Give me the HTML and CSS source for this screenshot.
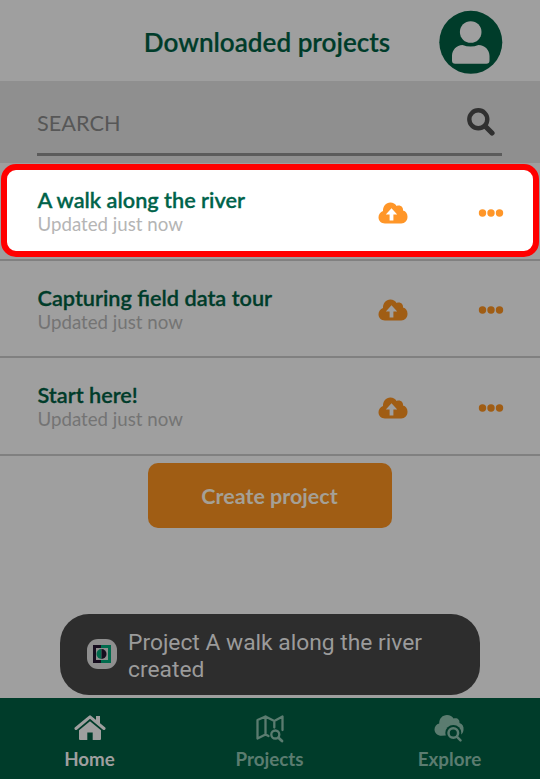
FILE: index.html
```html
<!DOCTYPE html>
<html lang="en">
<head>
<meta charset="utf-8">
<title>Downloaded projects</title>
<link rel="stylesheet" href="styles.css">
</head>
<body>
<svg width="0" height="0" class="defs">
  <symbol id="upload" viewBox="0 0 30 22">
    <path fill="currentColor" fill-rule="evenodd" d="M7 21.500C3.200 21.500.5 18.900.5 15.300C.5 12.500 2.300 9.900 5 9C4.800 4.200 8 .5 12.300.5C15.200.5 17.300 1.800 18.600 4C22.200 2.500 25.500 4.900 25 8.600C27.900 9.300 29.500 11.800 29.500 14.800C29.500 18.600 27 21.500 23.200 21.500ZM13.500 6.300L7.800 12.500H11.600V18.500H15.400V12.500H19.200Z"/>
  </symbol>
  <symbol id="dots" viewBox="0 0 26 8">
    <g fill="currentColor"><circle cx="4.500" cy="4" r="3.700"/><circle cx="13" cy="4" r="3.700"/><circle cx="21.500" cy="4" r="3.700"/></g>
  </symbol>
</svg>
<div class="app">
  <header class="header">
    <h1>Downloaded projects</h1>
    <svg class="avatar" viewBox="0 0 64 64"><circle cx="31.800" cy="32.300" r="31.500" fill="#003c2a"/><g fill="#9f9f9f"><circle cx="31.700" cy="22" r="10.800"/><path d="M23.500 35Q31.700 38 39.500 35C46 35 50.500 40 50.500 46V50.500Q50.500 53.700 47.300 53.700H16.200Q13 53.700 13 50.500V46C13 40 17.500 35 23.500 35Z"/></g></svg>
  </header>
  <div class="search">
    <div class="field">
      <span>SEARCH</span>
      <svg viewBox="0 0 28 28"><circle cx="11.300" cy="11.300" r="9" fill="none" stroke="#303030" stroke-width="4.400"/><path d="M18.500 18.500L25 25" stroke="#303030" stroke-width="5.200" stroke-linecap="round"/></svg>
    </div>
  </div>
  <ul class="projects">
    <li class="active"><div class="row">
      <div class="info"><h2>A walk along the river</h2><p>Updated just now</p></div>
      <svg class="cloud"><use href="#upload"/></svg><svg class="more"><use href="#dots"/></svg>
    </div></li>
    <li><div class="row">
      <div class="info"><h2>Capturing field data tour</h2><p>Updated just now</p></div>
      <svg class="cloud"><use href="#upload"/></svg><svg class="more"><use href="#dots"/></svg>
    </div></li>
    <li><div class="row">
      <div class="info"><h2>Start here!</h2><p>Updated just now</p></div>
      <svg class="cloud"><use href="#upload"/></svg><svg class="more"><use href="#dots"/></svg>
    </div></li>
  </ul>
  <button class="create">Create project</button>
  <div class="toast">
    <svg viewBox="0 0 30 30"><rect width="30" height="30" rx="11" fill="#8f8f8f"/><path d="M6 6H15V9H9V21H15V24H6Z" fill="#160d1f"/><path d="M14 6H24V24H14V21H21V9H14Z" fill="#006b4d"/><path d="M14.500 10A5 5 0 0 0 14.500 20Z" fill="#006b4d"/><path d="M14.500 10A5 5 0 0 1 14.500 20Z" fill="#160d1f"/></svg>
    <p>Project A walk along the river created</p>
  </div>
  <nav class="nav">
    <a class="current"><svg viewBox="0 0 32 30"><path d="M2 15.500L16 3.800L30 15.500" fill="none" stroke="currentColor" stroke-width="3" stroke-linejoin="round" stroke-linecap="round"/><path fill="currentColor" d="M22 3H26V12L22 8.600ZM16 8.200L27 17.300V26Q27 27 26 27H18.700V19.500H13.300V27H6Q5 27 5 26V17.300Z"/></svg>Home</a>
    <a><svg viewBox="0 0 32 30"><g fill="none" stroke="currentColor" stroke-width="2.300" stroke-linejoin="round" stroke-linecap="round"><path d="M14.500 23L11.500 21.500L3.500 25.500V7L11.500 3.500L20.300 8L28.500 3.500V17M11.500 3.500V21.500M20.300 8V14.500"/><circle cx="21.300" cy="21.500" r="4"/><path d="M24.500 24.700L28 28" stroke-width="2.800"/></g></svg>Projects</a>
    <a><svg viewBox="0 0 32 30"><path fill="currentColor" d="M7.500 22.800C3.600 22.800.5 20 .5 16.500C.5 13.500 2.300 11.200 5.200 10.500C5.200 5.500 8.500 2 13 2C16 2 18.300 3.500 19.500 5.500C23 4.200 26 6.500 25.500 10C28.500 11 30 13.500 29.500 17C29.200 19 28.500 20.500 27 21.500Z"/><circle cx="19.300" cy="20" r="8" fill="#003c2a"/><g fill="none" stroke="currentColor" stroke-width="2.500" stroke-linecap="round"><circle cx="19.300" cy="20" r="4.800"/><path d="M22.800 23.700L26.500 27.300"/></g></svg>Explore</a>
  </nav>
</div>
</body>
</html>
```
FILE: styles.css
```css
* { box-sizing: border-box; margin: 0; padding: 0; }
body { font-family: Lato, sans-serif; background: #9f9f9f; }
.defs { position: absolute; }
.app { width: 540px; height: 779px; display: flex; flex-direction: column; overflow: hidden; }
.header { height: 81px; display: grid; grid-template-columns: 101px 1fr 101px; align-items: center; padding-top: 3px; }
.header h1 { grid-column: 2; text-align: center; white-space: nowrap; font-size: 26.100px; line-height: 32px; font-weight: 600; color: #003c2a; margin: -1px 0 0 -6px; -webkit-text-stroke: .2px currentColor; }
.avatar { width: 64px; height: 64px; }
.search { height: 82px; background: #8f8f8f; padding: 0 38px 7px 37px; }
.field { height: 75px; border-bottom: 3px solid #5b5b5b; display: flex; justify-content: space-between; align-items: center; padding: 10px 7px 0 0; font-size: 21.700px; color: #575757; }
.field span { padding-top: 2px; }
.field svg { width: 28px; height: 28px; }
.projects { list-style: none; }
.projects li { height: 97.500px; border-bottom: 2px solid #808080; }
.row { height: 96px; display: flex; align-items: center; padding: 0 36px 0 37.500px; }
.info { width: 340.500px; }
.info h2 { font-size: 21.700px; line-height: 26px; font-weight: 600; color: #003c2a; -webkit-text-stroke: .3px currentColor; }
.info p { font-size: 18.700px; line-height: 22px; color: #747474; }
.cloud { width: 30px; height: 22px; color: #a05d14; margin-top: 3px; }
.more { width: 26px; height: 8px; color: #a05d14; margin: 3px 0 0 auto; }
.active { padding: 1px 1px 0; }
.active .row { height: 93px; border: 6px solid #f00; border-radius: 15px; background: #fff; padding: 1px 29px 0 30.500px; }
.active h2 { color: #00634a; }
.active p { color: #b5b5b5; }
.active .cloud, .active .more { color: #ff9628; }
.create { width: 244px; height: 65px; flex: none; align-self: center; margin-top: 7px; border: 0; border-radius: 10px; background: #a05d14; color: #a5a096; font: 700 21.500px Lato, sans-serif; padding: 2px 1px 0 0; }
.toast { width: 420px; height: 81px; flex: none; align-self: center; margin: auto 0 3px; background: #2d2d2d; border-radius: 29px; display: flex; align-items: center; padding: 2px 27px 0; gap: 11px; }
.toast svg { width: 30px; height: 30px; flex: none; margin-bottom: 4px; }
.toast p { font: 22.800px/27px Roboto, sans-serif; color: #9b9b9b; }
.nav { height: 81px; flex: none; background: #003c2a; display: grid; grid-template-columns: repeat(3, 1fr); }
.nav a { display: flex; flex-direction: column; align-items: center; padding: 15px 1px 0 0; font-size: 18.800px; line-height: 24px; font-weight: 700; color: #5b7c70; }
.nav a svg { width: 32px; height: 30px; margin-bottom: 4px; }
.nav .current { color: #9f9f9f; }
```
